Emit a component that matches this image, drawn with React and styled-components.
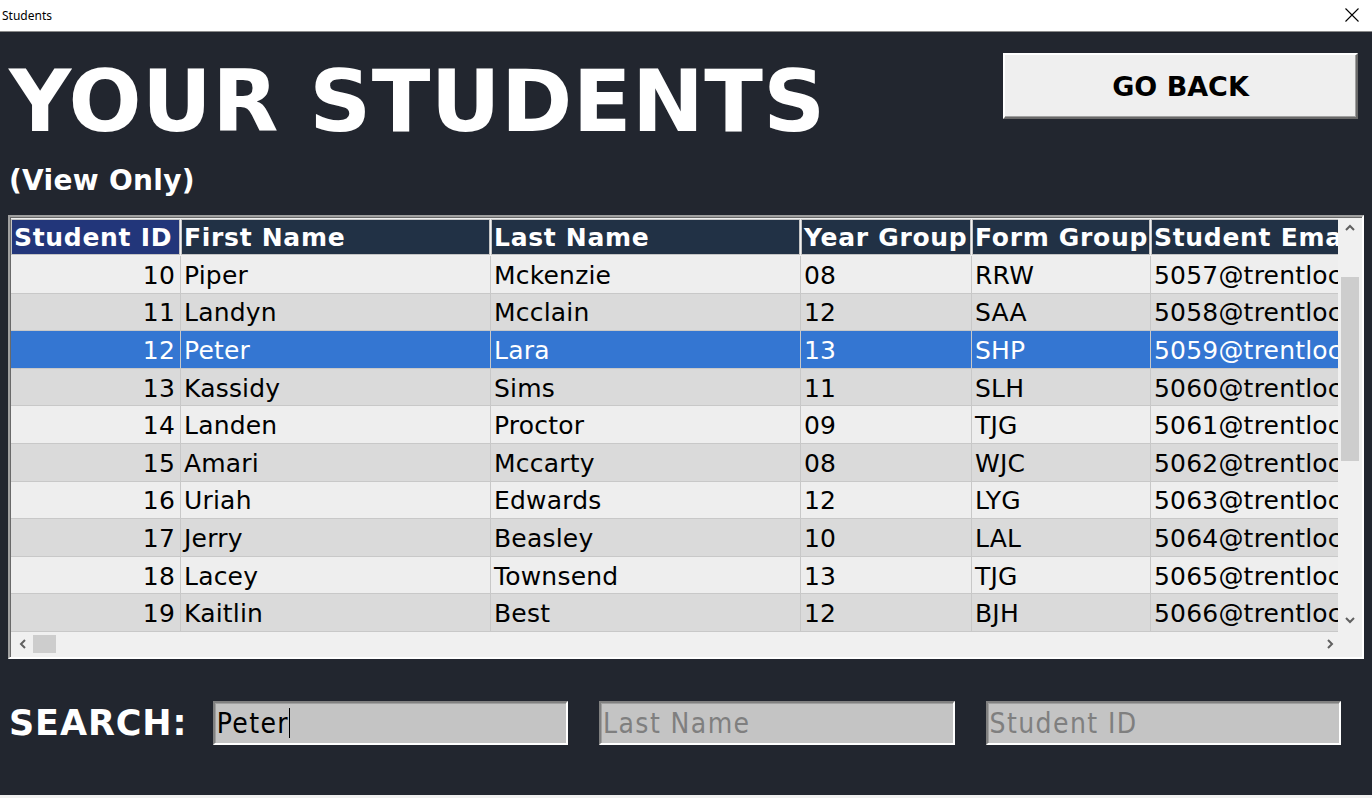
import React from 'react'
import styled, { createGlobalStyle } from 'styled-components'

const GlobalStyle = createGlobalStyle`
  html, body {
    margin: 0;
    padding: 0;
    background: #f0f0f0;
  }
  * { box-sizing: border-box; }
`

const Window = styled.div`
  width: 1372px;
  height: 798px;
  display: flex;
  flex-direction: column;
  overflow: hidden;
  background: #f0f0f0;
`

const TitleBar = styled.div`
  height: 32px;
  flex: none;
  display: flex;
  align-items: center;
  justify-content: space-between;
  background: #ffffff;
  border-bottom: 1px solid #8a8a8a;
  padding: 0 12px 1px 2px;
  font-family: "Noto Sans", "Open Sans", sans-serif;
  font-size: 12px;
  color: #000;
`

const CloseIcon = styled.svg`
  width: 16px;
  height: 16px;
`

const Main = styled.div`
  height: 763px;
  flex: none;
  background: #22262f;
  display: flex;
  flex-direction: column;
`

const Top = styled.div`
  display: flex;
  justify-content: space-between;
  align-items: flex-start;
`

const Heading = styled.div`
  padding: 26px 0 0 9px;
  color: #fff;
  font-family: "DejaVu Sans", Verdana, sans-serif;
  font-weight: 700;
`

const Title = styled.h1`
  margin: 0;
  font-size: 86px;
  line-height: 86px;
  letter-spacing: 0.4px;
`

const Subtitle = styled.div`
  margin-top: 23px;
  font-size: 28px;
  line-height: 27px;
  letter-spacing: 0.3px;
`

const BackButton = styled.button`
  margin: 21px 14px 0 0;
  width: 355px;
  height: 66px;
  background: #efefef;
  border: 2px solid;
  border-color: #ffffff #696969 #696969 #ffffff;
  box-shadow: inset -1px -1px 0 #a0a0a0;
  font-family: "DejaVu Sans", Verdana, sans-serif;
  font-weight: 700;
  font-size: 27px;
  color: #000;
  padding: 0;
`

const Frame = styled.div`
  margin: 21px 8px 0 8px;
  height: 444px;
  border: 2px solid;
  border-color: #a0a0a0 #ffffff #ffffff #a0a0a0;
  box-shadow: inset 1px 1px 0 #696969;
  background: #f0f0f0;
  padding: 2px 0 0 1px;
  display: grid;
  grid-template-columns: 1327px 24px;
  grid-template-rows: 413px 24px;
`

const Viewport = styled.div`
  overflow: hidden;
  background: #f0f0f0;
`

const Grid = styled.div`
  display: grid;
  grid-template-columns: 170px 310px 310px 171px 179px 240px;
  grid-auto-rows: 37.6px;
  grid-template-rows: 37px;
  width: 1380px;
  font-family: "DejaVu Sans", Verdana, sans-serif;
  font-size: 25px;
`

const HeadCell = styled.div`
  background: ${({ $active }) => ($active ? '#22367a' : '#213145')};
  color: #fff;
  font-weight: 700;
  border: 1px solid #c4c4c4;
  margin: 0 1px 1px 0;
  padding: 0 0 0 2px;
  display: flex;
  align-items: center;
  white-space: nowrap;
  overflow: hidden;
  letter-spacing: 0.7px;
`

const Cell = styled.div`
  background: ${({ $selected, $odd }) => ($selected ? '#3476d2' : $odd ? '#dadada' : '#eeeeee')};
  color: ${({ $selected }) => ($selected ? '#fff' : '#000')};
  border-right: 1px solid #c8c8c8;
  border-bottom: 1px solid #c8c8c8;
  display: flex;
  align-items: center;
  justify-content: ${({ $right }) => ($right ? 'flex-end' : 'flex-start')};
  padding: ${({ $right }) => ($right ? '2px 5px 0 0' : '2px 0 0 3px')};
  white-space: nowrap;
  overflow: hidden;
  letter-spacing: 0.2px;
`

const VScroll = styled.div`
  background: #f0f0f0;
  display: flex;
  flex-direction: column;
  align-items: center;
  padding: 3px 0 6px;
`

const HScroll = styled.div`
  grid-column: 1 / 3;
  background: #f0f0f0;
  display: flex;
  align-items: center;
  padding: 0 26px 0 6px;
`

const Thumb = styled.div`
  background: #cdcdcd;
  width: ${({ $w }) => $w};
  height: ${({ $h }) => $h};
  margin: ${({ $m }) => $m};
`

const Chevron = styled.svg`
  width: 12px;
  height: 12px;
  flex: none;
`

const Spacer = styled.div`
  flex: 1;
`

const SearchRow = styled.div`
  margin-top: 42px;
  display: flex;
  align-items: center;
  padding-left: 9px;
`

const SearchLabel = styled.div`
  width: 204px;
  color: #fff;
  font-family: "DejaVu Sans", Verdana, sans-serif;
  font-weight: 700;
  font-size: 35px;
  letter-spacing: 0.9px;
`

const SearchBox = styled.div`
  width: 356px;
  height: 44px;
  margin-right: 31px;
  background: #c4c4c4;
  border: 2px solid;
  border-color: #808080 #ffffff #ffffff #808080;
  box-shadow: inset 1px 1px 0 #a0a0a0;
  display: flex;
  align-items: center;
  padding-left: 2px;
  font-family: "DejaVu Sans Condensed", "DejaVu Sans", sans-serif;
  font-size: 28px;
  letter-spacing: 1.4px;
  color: ${({ $placeholder }) => ($placeholder ? '#7f7f7f' : '#000')};
`

const Caret = styled.span`
  display: inline-block;
  width: 1px;
  height: 30px;
  background: #000;
`

const columns = ['Student ID', 'First Name', 'Last Name', 'Year Group', 'Form Group', 'Student Email']

const students = [
  [10, 'Piper', 'Mckenzie', '08', 'RRW'],
  [11, 'Landyn', 'Mcclain', '12', 'SAA'],
  [12, 'Peter', 'Lara', '13', 'SHP'],
  [13, 'Kassidy', 'Sims', '11', 'SLH'],
  [14, 'Landen', 'Proctor', '09', 'TJG'],
  [15, 'Amari', 'Mccarty', '08', 'WJC'],
  [16, 'Uriah', 'Edwards', '12', 'LYG'],
  [17, 'Jerry', 'Beasley', '10', 'LAL'],
  [18, 'Lacey', 'Townsend', '13', 'TJG'],
  [19, 'Kaitlin', 'Best', '12', 'BJH'],
]

const Arrow = ({ dir }) => {
  const d = {
    up: 'M2 8 L6 4 L10 8',
    down: 'M2 4 L6 8 L10 4',
    left: 'M8 2 L4 6 L8 10',
    right: 'M4 2 L8 6 L4 10',
  }[dir]
  return (
    <Chevron viewBox="0 0 12 12">
      <path d={d} fill="none" stroke="#606060" strokeWidth="2" />
    </Chevron>
  )
}

export default function App() {
  return (
    <Window>
      <GlobalStyle />
      <TitleBar>
        <span>Students</span>
        <CloseIcon viewBox="0 0 16 16">
          <path d="M1.5 1.5 L14.5 14.5 M14.5 1.5 L1.5 14.5" stroke="#000" strokeWidth="1.1" />
        </CloseIcon>
      </TitleBar>
      <Main>
        <Top>
          <Heading>
            <Title>YOUR STUDENTS</Title>
            <Subtitle>(View Only)</Subtitle>
          </Heading>
          <BackButton>GO BACK</BackButton>
        </Top>

        <Frame>
          <Viewport>
            <Grid>
              {columns.map((c, i) => (
                <HeadCell key={c} $active={i === 0}>{c}</HeadCell>
              ))}
              {students.map((s, r) => {
                const selected = s[1] === 'Peter'
                const odd = r % 2 === 1
                const email = `${5047 + s[0]}@trentlock.sch.uk`
                return [s[0], s[1], s[2], s[3], s[4], email].map((v, i) => (
                  <Cell key={`${s[0]}-${i}`} $selected={selected} $odd={odd} $right={i === 0}>
                    {v}
                  </Cell>
                ))
              })}
            </Grid>
          </Viewport>
          <VScroll>
            <Arrow dir="up" />
            <Thumb $w="18px" $h="184px" $m="43px 0 0" />
            <Spacer />
            <Arrow dir="down" />
          </VScroll>
          <HScroll>
            <Arrow dir="left" />
            <Thumb $w="23px" $h="18px" $m="0 0 0 4px" />
            <Spacer />
            <Arrow dir="right" />
          </HScroll>
        </Frame>

        <SearchRow>
          <SearchLabel>SEARCH:</SearchLabel>
          <SearchBox>Peter<Caret /></SearchBox>
          <SearchBox $placeholder>Last Name</SearchBox>
          <SearchBox $placeholder>Student ID</SearchBox>
        </SearchRow>
      </Main>
    </Window>
  )
}
